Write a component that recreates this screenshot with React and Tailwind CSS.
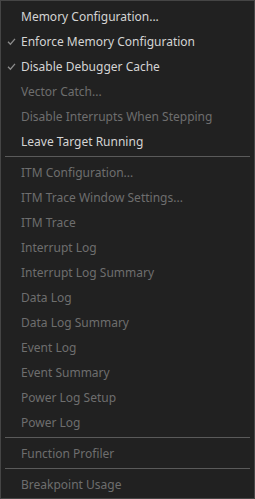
const groups = [
  [
    { label: "Memory Configuration...", enabled: true },
    { label: "Enforce Memory Configuration", enabled: true, checked: true },
    { label: "Disable Debugger Cache", enabled: true, checked: true },
    { label: "Vector Catch..." },
    { label: "Disable Interrupts When Stepping" },
    { label: "Leave Target Running", enabled: true },
  ],
  [
    { label: "ITM Configuration..." },
    { label: "ITM Trace Window Settings..." },
    { label: "ITM Trace" },
    { label: "Interrupt Log" },
    { label: "Interrupt Log Summary" },
    { label: "Data Log" },
    { label: "Data Log Summary" },
    { label: "Event Log" },
    { label: "Event Summary" },
    { label: "Power Log Setup" },
    { label: "Power Log" },
  ],
  [{ label: "Function Profiler" }],
  [{ label: "Breakpoint Usage" }],
];

function Check() {
  return (
    <svg width="9" height="9" viewBox="0 0 9 9" fill="none">
      <path d="M1 4.8 L3.4 7.2 L8 1.8" stroke="#8c8c8c" strokeWidth="1.3" />
    </svg>
  );
}

export default function App() {
  return (
    <div
      className="w-[255px] h-[499px] bg-[#212121] border border-[#454545] pt-[3px] pb-px overflow-hidden"
      style={{ fontFamily: '"Noto Sans", "Open Sans", sans-serif' }}
    >
      {groups.map((items, gi) => (
        <div key={gi}>
          {gi > 0 && (
            <div className="pt-[2px] pb-[3px] px-[4px]">
              <div className="h-px bg-[#5a5a5a]" />
            </div>
          )}
          {items.map((it) => (
            <div key={it.label} className="h-[25px] flex items-center">
              <div className="w-[20px] flex justify-center pl-[1px]">
                {it.checked && <Check />}
              </div>
              <span
                className={
                  "text-[12px] whitespace-nowrap " +
                  (it.enabled ? "text-[#d4d4d4]" : "text-[#6e6e6e]")
                }
              >
                {it.label}
              </span>
            </div>
          ))}
        </div>
      ))}
    </div>
  );
}
